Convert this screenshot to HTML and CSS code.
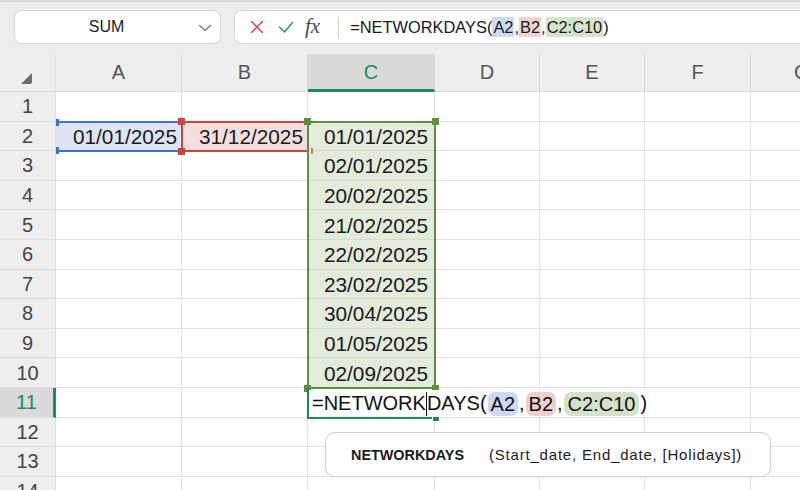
FILE: index.html
```html
<!DOCTYPE html>
<html lang="en">
  <head>
    <meta charset="UTF-8" />
    <title>NETWORKDAYS - Sheet</title>
    <meta name="viewport" content="width=device-width, initial-scale=1.0" />
    <link rel="stylesheet" href="styles.css">
  </head>
  <body>
    <!-- TOP BAR: name box + formula bar -->
    <div class="toolbar">
      <div class="namebox">
        <span class="namebox-text">SUM</span>
        <svg class="chevron" width="14" height="8" viewBox="0 0 14 8" fill="none" stroke="#7a7a7a" stroke-width="1.4" stroke-linecap="round" stroke-linejoin="round">
          <path d="M1.5 1.5l5.5 5 5.5-5"/>
        </svg>
      </div>
      <div class="formula-bar">
        <svg class="fb-icon" width="14" height="14" viewBox="0 0 14 14" fill="none" stroke="#d8434b" stroke-width="1.5" stroke-linecap="round">
          <line x1="1.5" y1="1.5" x2="12.5" y2="12.5"/>
          <line x1="12.5" y1="1.5" x2="1.5" y2="12.5"/>
        </svg>
        <svg class="fb-icon" width="16" height="12" viewBox="0 0 16 12" fill="none" stroke="#2e9a5d" stroke-width="1.5" stroke-linecap="round" stroke-linejoin="round">
          <path d="M1.5 6l5 5 8-9.5"/>
        </svg>
        <span class="fx">fx</span>
        <span class="fb-divider"></span>
        <span class="formula">=NETWORKDAYS(<span class="ref ref-a">A2</span>,<span class="ref ref-b">B2</span>,<span class="ref ref-c">C2:C10</span>)</span>
      </div>
    </div>

    <!-- SHEET GRID -->
    <div class="sheet">
      <div class="corner"><span class="corner-tri"></span></div>
      <div class="ch">A</div>
      <div class="ch">B</div>
      <div class="ch ch-active">C</div>
      <div class="ch">D</div>
      <div class="ch">E</div>
      <div class="ch">F</div>
      <div class="ch ch-last">G</div>

      <div class="rh">1</div><div class="cell"></div><div class="cell"></div><div class="cell"></div><div class="cell"></div><div class="cell"></div><div class="cell"></div><div class="cell"></div>
      <div class="rh">2</div><div class="cell fill-blue">01/01/2025</div><div class="cell fill-red">31/12/2025</div><div class="cell fill-green">01/01/2025</div><div class="cell"></div><div class="cell"></div><div class="cell"></div><div class="cell"></div>
      <div class="rh">3</div><div class="cell"></div><div class="cell"></div><div class="cell fill-green">02/01/2025</div><div class="cell"></div><div class="cell"></div><div class="cell"></div><div class="cell"></div>
      <div class="rh">4</div><div class="cell"></div><div class="cell"></div><div class="cell fill-green">20/02/2025</div><div class="cell"></div><div class="cell"></div><div class="cell"></div><div class="cell"></div>
      <div class="rh">5</div><div class="cell"></div><div class="cell"></div><div class="cell fill-green">21/02/2025</div><div class="cell"></div><div class="cell"></div><div class="cell"></div><div class="cell"></div>
      <div class="rh">6</div><div class="cell"></div><div class="cell"></div><div class="cell fill-green">22/02/2025</div><div class="cell"></div><div class="cell"></div><div class="cell"></div><div class="cell"></div>
      <div class="rh">7</div><div class="cell"></div><div class="cell"></div><div class="cell fill-green">23/02/2025</div><div class="cell"></div><div class="cell"></div><div class="cell"></div><div class="cell"></div>
      <div class="rh">8</div><div class="cell"></div><div class="cell"></div><div class="cell fill-green">30/04/2025</div><div class="cell"></div><div class="cell"></div><div class="cell"></div><div class="cell"></div>
      <div class="rh">9</div><div class="cell"></div><div class="cell"></div><div class="cell fill-green">01/05/2025</div><div class="cell"></div><div class="cell"></div><div class="cell"></div><div class="cell"></div>
      <div class="rh">10</div><div class="cell"></div><div class="cell"></div><div class="cell fill-green">02/09/2025</div><div class="cell"></div><div class="cell"></div><div class="cell"></div><div class="cell"></div>
      <div class="rh rh-active">11</div><div class="cell"></div><div class="cell"></div><div class="cell"></div><div class="cell"></div><div class="cell"></div><div class="cell"></div><div class="cell"></div>
      <div class="rh">12</div><div class="cell"></div><div class="cell"></div><div class="cell"></div><div class="cell"></div><div class="cell"></div><div class="cell"></div><div class="cell"></div>
      <div class="rh">13</div><div class="cell"></div><div class="cell"></div><div class="cell"></div><div class="cell"></div><div class="cell"></div><div class="cell"></div><div class="cell"></div>
      <div class="rh">14</div><div class="cell"></div><div class="cell"></div><div class="cell"></div><div class="cell"></div><div class="cell"></div><div class="cell"></div><div class="cell"></div>

      <!-- reference range outlines (drawn over the cells) -->
      <div class="range range-a">
        <span class="tick tick-tl"></span>
        <span class="tick tick-bl"></span>
      </div>
      <div class="range range-b">
        <span class="handle handle-tl"></span>
        <span class="handle handle-bl"></span>
        <span class="tick-r tick-br"></span>
      </div>
      <div class="range range-c">
        <span class="handle handle-tl"></span>
        <span class="handle handle-tr"></span>
        <span class="handle handle-bl"></span>
        <span class="handle handle-br"></span>
      </div>

      <!-- active cell C11 in edit mode -->
      <div class="active-cell"><span class="fill-handle"></span></div>
      <div class="editor">=NETWORK<span class="caret"></span>DAYS(<span class="pill pill-a">A2</span>,<span class="pill pill-b">B2</span>,<span class="pill pill-c">C2:C10</span>)</div>

      <!-- function hint -->
      <div class="hint">
        <span class="hint-name">NETWORKDAYS</span>
        <span class="hint-args">(Start_date, End_date, [Holidays])</span>
      </div>
    </div>
  </body>
</html>
```

FILE: styles.css
```css
/* RESET & VARIABLES */
* {
  margin: 0;
  padding: 0;
  box-sizing: border-box;
}
:root {
  --chrome: #ededed;
  --header: #eeeeee;
  --header-active: #dadada;
  --grid: #e2e2e2;
  --select: #1f8a55;
  --blue: #3e6fd6;
  --red: #c7473f;
  --green: #5c8f3f;
}

body {
  font-family: "Liberation Sans", Arial, sans-serif;
  background: #fff;
  color: #1a1a1a;
  width: 800px;
  height: 490px;
  overflow: hidden;
}

/* TOP BAR */
.toolbar {
  height: 54px;
  background: var(--chrome);
  border-top: 2px solid #d9d9d9;
  display: flex;
  align-items: flex-start;
  gap: 13px;
  padding: 8px 0 0 14px;
}
.namebox {
  width: 207px;
  height: 34px;
  background: #fff;
  border: 1px solid #d8d8d8;
  border-radius: 8px;
  display: flex;
  align-items: center;
  padding: 0 8px 0 0;
}
.namebox-text {
  flex: 1;
  text-align: center;
  font-size: 16px;
  color: #222;
}
.chevron {
  margin-top: 1px;
}
.formula-bar {
  flex: 1;
  height: 34px;
  background: #fff;
  border: 1px solid #d8d8d8;
  border-right: none;
  border-radius: 8px 0 0 8px;
  display: flex;
  align-items: center;
  padding-left: 15px;
}
.fb-icon {
  margin-right: 14px;
}
.fx {
  font-family: "Liberation Serif", serif;
  font-style: italic;
  font-size: 21px;
  color: #4a4a4a;
  margin-left: -3px;
  margin-bottom: 2px;
}
.fb-divider {
  width: 1px;
  height: 21px;
  background: #d2d2d2;
  margin: 0 11px 0 18px;
}
.formula {
  font-size: 16.4px;
  color: #1a1a1a;
  white-space: nowrap;
}
.ref {
  display: inline-block;
  line-height: 20px;
  padding: 0 1px;
}
.ref-a { background: #cfdaf3; }
.ref-b { background: #f3d3d2; }
.ref-c { background: #d6e4cd; }

/* SHEET */
.sheet {
  position: relative;
  display: grid;
  grid-template-columns: 56px 126px 126px 127px 105px 105px 106px 1fr;
  grid-template-rows: 38px repeat(14, 29.6px);
  height: 436px;
  overflow: hidden;
}
.corner,
.ch,
.rh {
  background: var(--header);
  display: flex;
  align-items: center;
  justify-content: center;
  font-size: 20px;
  color: #555;
}
.corner {
  border-bottom: 1px solid #dcdcdc;
  border-right: 1px solid #e4e4e4;
  position: relative;
}
.corner-tri {
  width: 11px;
  height: 11px;
  background: #6a6a6a;
  clip-path: polygon(100% 0, 100% 100%, 0 100%);
  border-radius: 0 0 2px 0;
  margin: 12px 0 0 -2px;
}
.ch {
  border-right: 1px solid #dadada;
  border-bottom: 1px solid #dcdcdc;
}
.ch-last {
  justify-content: flex-start;
  padding-left: 43px;
}
.ch-active {
  background: var(--header-active);
  color: var(--select);
  border-bottom: 3px solid var(--select);
  padding-top: 2px;
}
.rh {
  border-bottom: 1px solid #e0e0e0;
  border-right: 1px solid #dedede;
  color: #444;
  padding-top: 1px;
}
.rh-active {
  background: var(--header-active);
  color: var(--select);
  border-right: 3px solid var(--select);
}
.cell {
  border-right: 1px solid var(--grid);
  border-bottom: 1px solid var(--grid);
  font-size: 20.8px;
  display: flex;
  align-items: center;
  justify-content: flex-end;
  padding: 2px 4px 0 0;
  white-space: nowrap;
}
.fill-blue { background: #dde4f4; }
.fill-red { background: #f5dfde; }
.fill-green {
  background: #e3ebdc;
  border-bottom-color: #d2dccb;
  padding-right: 6px;
}

/* REFERENCE RANGES */
.range {
  position: absolute;
  pointer-events: none;
}
.range-a {
  left: 56px;
  top: 66.6px;
  width: 126px;
  height: 31.6px;
  border-top: 2px solid var(--blue);
  border-bottom: 2px solid var(--blue);
}
.range-b {
  left: 181px;
  top: 66.6px;
  width: 128px;
  height: 31.6px;
  border: 2px solid var(--red);
}
.range-c {
  left: 307px;
  top: 66.6px;
  width: 129px;
  height: 268.4px;
  border: 2px solid var(--green);
}
.tick {
  position: absolute;
  left: 0;
  width: 3px;
  height: 7px;
  background: var(--blue);
}
.tick-tl { top: -4px; }
.tick-bl { bottom: -4px; }
.tick-r {
  position: absolute;
  width: 2px;
  height: 6px;
  background: #d9716b;
}
.tick-br {
  right: -6px;
  bottom: -4px;
}
.handle {
  position: absolute;
  width: 7px;
  height: 7px;
}
.range-b .handle { background: var(--red); }
.range-c .handle { background: var(--green); }
.handle-tl { left: -5px; top: -5px; }
.handle-tr { right: -5px; top: -5px; }
.handle-bl { left: -5px; bottom: -5px; }
.handle-br { right: -5px; bottom: -5px; }

/* ACTIVE CELL / EDITOR */
.active-cell {
  position: absolute;
  left: 307px;
  top: 334px;
  width: 128px;
  height: 31px;
  border-left: 2px solid var(--select);
  border-bottom: 2px solid var(--select);
}
.fill-handle {
  position: absolute;
  right: -5px;
  bottom: -5px;
  width: 8px;
  height: 7px;
  background: var(--select);
  border: 1px solid #fff;
}
.editor {
  position: absolute;
  left: 309px;
  top: 336px;
  height: 27px;
  background: #fff;
  display: flex;
  align-items: center;
  padding: 0 6px 0 3px;
  font-size: 20px;
  color: #111;
  white-space: nowrap;
}
.caret {
  display: inline-block;
  width: 1px;
  height: 24px;
  background: #111;
}
.pill {
  display: inline-block;
  line-height: 24px;
  padding: 0 3px;
  border-radius: 7px;
  margin: 0 1px;
}
.pill-a { background: #cdd8f1; }
.pill-b { background: #efd0cf; }
.pill-c { background: #d5e2cb; padding: 0 4px; }

/* FUNCTION HINT */
.hint {
  position: absolute;
  left: 325px;
  top: 378px;
  width: 446px;
  height: 45px;
  background: #fff;
  border: 1px solid #d0d0d0;
  border-radius: 10px;
  box-shadow: 0 1px 3px rgba(0, 0, 0, 0.06);
  display: flex;
  align-items: center;
  padding-left: 25px;
  color: #1c1c1c;
}
.hint-name {
  font-weight: 700;
  font-size: 14.4px;
  width: 138px;
}
.hint-args {
  font-size: 15px;
  letter-spacing: 0.8px;
}
```
